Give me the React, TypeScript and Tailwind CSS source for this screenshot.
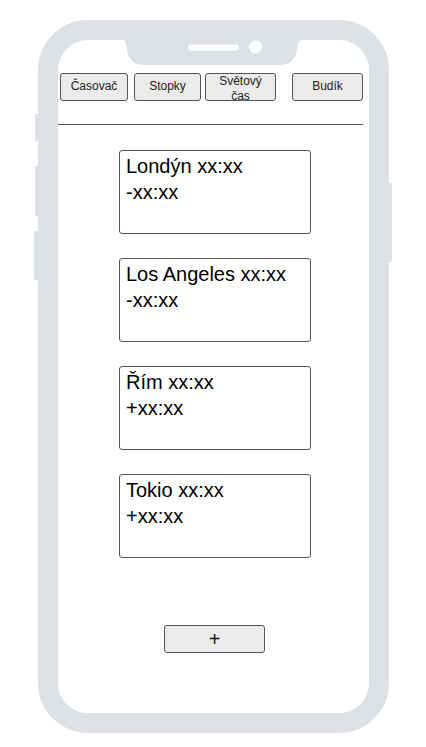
const tabs = [
  { label: 'Časovač', size: 'w-[68px] mr-[6px]' },
  { label: 'Stopky', size: 'w-[67px] mr-1' },
  { label: 'Světový čas', size: 'w-[71px]' },
  { label: 'Budík', size: 'w-[71px] ml-auto' },
];

const cities = [
  { name: 'Londýn', offset: '-xx:xx' },
  { name: 'Los Angeles', offset: '-xx:xx' },
  { name: 'Řím', offset: '+xx:xx' },
  { name: 'Tokio', offset: '+xx:xx' },
];

function PhoneHardware() {
  return (
    <>
      <svg
        aria-hidden="true"
        className="absolute -top-5 left-1/2 -ml-[90px] h-[46px] w-[180px]"
        viewBox="0 0 180 46"
      >
        <path
          d="M0 0H180V20H178Q174 20 173.500 26C172.500 39 166 45 157 45H19C10 45 3 39 2.500 26Q2 20 -2 20H0Z"
          fill="#dde1e6"
        />
        <rect x="64" y="24.500" width="51" height="6" rx="3" fill="#fff" />
        <circle cx="131.500" cy="27" r="6.500" fill="#fff" />
      </svg>
      <span className="absolute -left-[23px] top-[74px] h-[27px] w-[4px] rounded-l-[1px] bg-[#dde1e6]" />
      <span className="absolute -left-[23px] top-[126px] h-[50px] w-[4px] rounded-l-[1px] bg-[#dde1e6]" />
      <span className="absolute -left-[24px] top-[191px] h-[49px] w-[5px] rounded-l-[1px] bg-[#dde1e6]" />
      <span className="absolute -right-[23px] top-[143px] h-[79px] w-[4px] rounded-r-[1px] bg-[#dde1e6]" />
    </>
  );
}

export default function App() {
  return (
    <div className="min-h-screen bg-white pt-5 pr-[37px] pb-[14px] pl-[38px] font-['Liberation_Sans',Arial,sans-serif] text-black">
      <main className="relative mx-auto max-w-[420px] rounded-[50px] border-20 border-[#dde1e6] bg-white pb-[60px]">
        <PhoneHardware />
        <nav className="mr-[6px] flex border-b border-[#555] pt-[33px] pb-[23px] pl-[2px]">
          {tabs.map((tab) => (
            <button
              key={tab.label}
              type="button"
              className={`h-7 overflow-hidden rounded-[3px] border border-[#555] bg-[#ebebeb] px-2 pb-[2px] text-xs leading-[15px] text-[#222] ${tab.size}`}
            >
              {tab.label}
            </button>
          ))}
        </nav>
        <ul className="mt-[25px] flex flex-col items-center gap-6 pl-[3px]">
          {cities.map((city) => (
            <li
              key={city.name}
              className="h-[84px] w-48 rounded-[3px] border border-[#555] px-[6px] pt-[2px] text-xl leading-[26px]"
            >
              <p>{city.name} xx:xx</p>
              <p>{city.offset}</p>
            </li>
          ))}
        </ul>
        <div className="mt-[67px] flex justify-center pl-[2px]">
          <button
            type="button"
            className="h-7 w-[101px] rounded-[3px] border border-[#555] bg-[#ebebeb] text-xl leading-6 text-[#112]"
          >
            +
          </button>
        </div>
      </main>
    </div>
  );
}
